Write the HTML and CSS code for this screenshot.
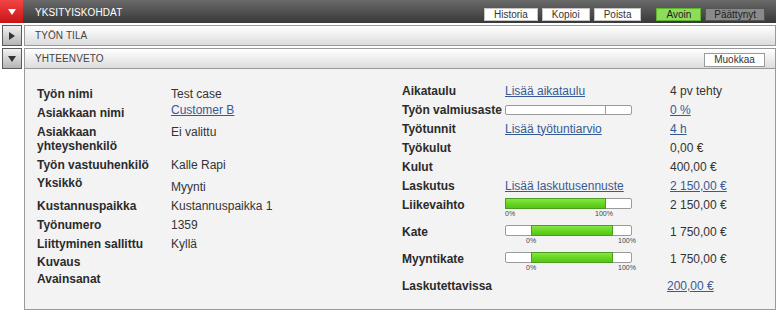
FILE: index.html
```html
<!DOCTYPE html>
<html lang="fi">
<head>
  <meta charset="UTF-8" />
  <meta name="viewport" content="width=device-width, initial-scale=1" />
  <title>Yksityiskohdat</title>
  <link rel="stylesheet" href="styles.css">
</head>
<body>

  <div class="page">
    <!-- Otsikkopalkki -->
    <div class="section section-main">
      <div class="toggle toggle-red"><span class="tri tri-down-white"></span></div>
      <div class="bar bar-dark">
        <span class="bar-title">YKSITYISKOHDAT</span>
        <div class="bar-actions">
          <button class="btn">Historia</button>
          <button class="btn">Kopioi</button>
          <button class="btn">Poista</button>
          <div class="status">
            <button class="btn btn-open">Avoin</button>
            <button class="btn btn-closed">Päättynyt</button>
          </div>
        </div>
      </div>
    </div>

    <div class="section">
      <div class="toggle"><span class="tri tri-right"></span></div>
      <div class="bar">
        <span class="bar-title">TYÖN TILA</span>
      </div>
    </div>

    <div class="section">
      <div class="toggle"><span class="tri tri-down"></span></div>
      <div class="bar">
        <span class="bar-title">YHTEENVETO</span>
        <button class="btn btn-edit">Muokkaa</button>
      </div>
    </div>

    <!-- Yhteenveto -->
    <div class="panel">
      <div class="info-left">
        <div class="row">
          <span class="label">Työn nimi</span>
          <span class="value">Test case</span>
        </div>
        <div class="row">
          <span class="label">Asiakkaan nimi</span>
          <span class="value value-top"><a href="#">Customer B</a></span>
        </div>
        <div class="row row-double">
          <span class="label">Asiakkaan<br>yhteyshenkilö</span>
          <span class="value value-top">Ei valittu</span>
        </div>
        <div class="row">
          <span class="label">Työn vastuuhenkilö</span>
          <span class="value">Kalle Rapi</span>
        </div>
        <div class="row row-wide">
          <span class="label label-top">Yksikkö</span>
          <span class="value value-bottom">Myynti</span>
        </div>
        <div class="row">
          <span class="label">Kustannuspaikka</span>
          <span class="value">Kustannuspaikka 1</span>
        </div>
        <div class="row">
          <span class="label">Työnumero</span>
          <span class="value">1359</span>
        </div>
        <div class="row">
          <span class="label">Liittyminen sallittu</span>
          <span class="value">Kyllä</span>
        </div>
        <div class="row row-short">
          <span class="label">Kuvaus</span>
          <span class="value"></span>
        </div>
        <div class="row row-tiny">
          <span class="label">Avainsanat</span>
          <span class="value"></span>
        </div>
      </div>

      <div class="info-right">
        <div class="row">
          <span class="label">Aikataulu</span>
          <span class="value"><a href="#">Lisää aikataulu</a></span>
          <span class="value">4 pv tehty</span>
        </div>
        <div class="row">
          <span class="label">Työn valmiusaste</span>
          <span class="value">
            <span class="meter meter-plain"><span class="meter-split"></span></span>
          </span>
          <span class="value"><a href="#">0 %</a></span>
        </div>
        <div class="row">
          <span class="label">Työtunnit</span>
          <span class="value"><a href="#">Lisää työtuntiarvio</a></span>
          <span class="value"><a href="#">4 h</a></span>
        </div>
        <div class="row">
          <span class="label">Työkulut</span>
          <span class="value"></span>
          <span class="value">0,00 €</span>
        </div>
        <div class="row">
          <span class="label">Kulut</span>
          <span class="value"></span>
          <span class="value">400,00 €</span>
        </div>
        <div class="row">
          <span class="label">Laskutus</span>
          <span class="value"><a href="#">Lisää laskutusennuste</a></span>
          <span class="value"><a href="#">2 150,00 €</a></span>
        </div>
        <div class="row row-bar">
          <span class="label">Liikevaihto</span>
          <span class="value">
            <span class="meter"><span class="meter-fill" style="width: 101px;"></span></span>
            <span class="scale">
              <span style="left: 0px;">0%</span>
              <span style="left: 90px;">100%</span>
            </span>
          </span>
          <span class="value">2 150,00 €</span>
        </div>
        <div class="row row-bar">
          <span class="label">Kate</span>
          <span class="value">
            <span class="meter"><span class="meter-fill" style="margin-left: 25px; width: 82px;"></span></span>
            <span class="scale">
              <span style="left: 21px;">0%</span>
              <span style="left: 113px;">100%</span>
            </span>
          </span>
          <span class="value">1 750,00 €</span>
        </div>
        <div class="row row-bar">
          <span class="label">Myyntikate</span>
          <span class="value">
            <span class="meter"><span class="meter-fill" style="margin-left: 25px; width: 82px;"></span></span>
            <span class="scale">
              <span style="left: 21px;">0%</span>
              <span style="left: 113px;">100%</span>
            </span>
          </span>
          <span class="value">1 750,00 €</span>
        </div>
        <div class="row row-bar">
          <span class="label">Laskutettavissa</span>
          <span class="value"></span>
          <span class="value value-shift"><a href="#">200,00 €</a></span>
        </div>
      </div>
    </div>
  </div>

</body>
</html>
```

FILE: styles.css
```css
/* Reset & base */
* {
  box-sizing: border-box;
}
body {
  margin: 0;
  background: #ffffff;
  font-family: 'Liberation Sans', Arial, sans-serif;
  font-size: 12px;
  color: #333333;
}
a {
  color: #375a93;
}
.page {
  width: 776px;
}

/* Otsikkorivit */
.section {
  display: flex;
  height: 21px;
  margin-top: 2px;
}
.section-main {
  height: 23px;
  margin-top: 0;
}
.toggle {
  width: 20px;
  margin: 0 2px;
  border: 1px solid #5a5a5a;
  background: linear-gradient(#f2f2f2, #b4b4b4);
  display: flex;
  align-items: center;
  justify-content: center;
}
.toggle-red {
  width: 23px;
  margin: 0;
  border: none;
  background: linear-gradient(#f24545, #c81414);
}
.tri {
  width: 0;
  height: 0;
}
.tri-down-white {
  border-left: 4px solid transparent;
  border-right: 4px solid transparent;
  border-top: 6px solid #ffffff;
}
.tri-down {
  border-left: 4px solid transparent;
  border-right: 4px solid transparent;
  border-top: 6px solid #333333;
}
.tri-right {
  border-top: 4px solid transparent;
  border-bottom: 4px solid transparent;
  border-left: 6px solid #333333;
}
.bar {
  flex: 1;
  display: flex;
  align-items: center;
  justify-content: space-between;
  padding: 0 10px;
  border: 1px solid #9a9a9a;
  background: linear-gradient(#ffffff, #dcdcdc);
}
.bar-dark {
  border: none;
  padding: 0 11px 0 12px;
  background: linear-gradient(#6a6a6a, #383838);
  align-items: stretch;
}
.bar-title {
  font-size: 10px;
  color: #444444;
  letter-spacing: 0.1px;
}
.bar-dark .bar-title {
  color: #ffffff;
  align-self: center;
  padding-top: 2px;
}
.bar-actions {
  display: flex;
  align-items: flex-end;
  gap: 4px;
  padding-bottom: 2px;
}
.status {
  display: flex;
  gap: 4px;
  margin-left: 11px;
}

/* Napit */
.btn {
  font-family: 'Liberation Sans', Arial, sans-serif;
  font-size: 10px;
  line-height: 11px;
  height: 13px;
  padding: 0 9px;
  margin: 0;
  background: #ffffff;
  border: 1px solid #c4c4c4;
  color: #333333;
  border-radius: 0;
}
.btn-open {
  background: #8edc5a;
  border-color: #5fb62e;
  padding: 0 9px;
  color: #222222;
}
.btn-closed {
  background: #8a8a8a;
  border-color: #555555;
  padding: 0 8px;
  color: #1e1e1e;
}
.btn-edit {
  width: 61px;
  height: 14px;
  margin-top: 2px;
  padding: 0;
  border-color: #9a9a9a;
}

/* Yhteenveto */
.panel {
  margin-left: 24px;
  height: 241px;
  border: 1px solid #9a9a9a;
  border-top: none;
  background: #f3f3f3;
  display: flex;
  padding: 15px 0 0 12px;
}
.info-left {
  width: 365px;
}
.info-right {
  flex: 1;
  margin-top: -3px;
}
.row {
  display: grid;
  grid-template-columns: 134px 1fr;
  height: 19px;
  align-items: center;
  line-height: 14px;
}
.info-right .row {
  grid-template-columns: 103px 165px 1fr;
}
.row-double {
  height: 33px;
}
.row-wide {
  height: 22px;
}
.row-short {
  height: 18px;
}
.row-tiny {
  height: 16px;
}
.label {
  font-weight: bold;
  color: #2b2b2b;
  white-space: nowrap;
}
.label-top {
  align-self: start;
  padding-top: 2px;
}
.value-top {
  align-self: start;
  padding-top: 0;
}
.row-double .value-top {
  padding-top: 3px;
}
.value-bottom {
  align-self: end;
  padding-bottom: 2px;
}
.value-shift {
  margin-left: -3px;
}

/* Mittarit */
.row-bar {
  height: 27px;
  align-items: start;
  padding-top: 3px;
}
.meter {
  display: flex;
  width: 127px;
  height: 11px;
  background: #ffffff;
  border: 1px solid #9a9a9a;
  border-radius: 2px;
}
.meter-plain {
  height: 10px;
  margin-top: 1px;
}
.meter-split {
  width: 100px;
  border-right: 1px solid #9a9a9a;
}
.meter-fill {
  height: 11px;
  margin-top: -1px;
  margin-bottom: -1px;
  border: 1px solid #4c9c1e;
  background: linear-gradient(#86e646, #6ad826 45%, #58c416);
}
.row-bar .meter-fill:first-child {
  margin-left: -1px;
}
.scale {
  display: block;
  position: relative;
  height: 8px;
  margin-top: 1px;
  font-size: 7px;
  line-height: 8px;
  color: #444444;
}
.scale span {
  position: absolute;
  top: 0;
}
```
